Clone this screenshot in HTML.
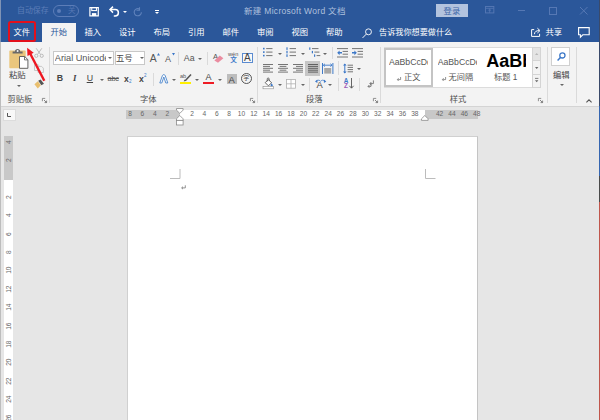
<!DOCTYPE html>
<html lang="zh-CN">
<head>
<meta charset="utf-8">
<title>新建 Microsoft Word 文档</title>
<style>
html,body{margin:0;padding:0;}
body{width:600px;height:420px;overflow:hidden;background:#e6e6e6;position:relative;
  font-family:"Liberation Sans","Noto Sans CJK SC",sans-serif;font-size:8.5px;color:#444;}
#app{position:absolute;left:0;top:0;width:600px;height:420px;overflow:hidden;}
#app div,#app span,#app svg{position:absolute;}
#title{left:0;top:0;width:599px;height:42px;background:#2b579a;}
#ribbon{left:0;top:42px;width:599px;height:64px;background:#f3f3f3;border-bottom:1px solid #d4d4d4;}
.t{white-space:nowrap;line-height:1;}
.tab{color:#fff;font-size:8.3px;top:28px;}
.sep{width:1px;background:#dadada;}
.lbl{top:95.2px;font-size:8.3px;color:#505050;}
.arr{width:0;height:0;border-left:2px solid transparent;border-right:2px solid transparent;border-top:2.2px solid #666;}
svg{overflow:visible;}
</style>
</head>
<body>
<div id="app">
<div id="title"></div>
<div id="ribbon"></div>

<!-- title bar -->
<div class="t" style="left:17px;top:6.8px;font-size:7.9px;color:#5c7db8;">自动保存</div>
<div style="left:53px;top:5px;width:24px;height:10px;border:1px solid #5c7db8;border-radius:6px;"></div>
<div style="left:57px;top:8.5px;width:4px;height:4px;border-radius:2px;background:#5c7db8;"></div>
<div class="t" style="left:68px;top:6.5px;font-size:7.5px;color:#5678b4;">关</div>
<svg style="left:89.3px;top:6.6px" width="10.2" height="9.6" viewBox="0 0 11 11"><path d="M0.7 0.7h9.6v9.6h-9.6z" fill="none" stroke="#fff" stroke-width="1.4"/><rect x="2.8" y="0.7" width="5.4" height="3.4" fill="none" stroke="#fff" stroke-width="1.2"/><rect x="3" y="7" width="5" height="3.3" fill="#fff"/></svg>
<svg style="left:109px;top:6px" width="11" height="11" viewBox="0 0 11 11"><path d="M1 3.6h5.2a3.2 3.2 0 0 1 0 6.4h-1.4" fill="none" stroke="#fff" stroke-width="1.5"/><path d="M4 0.6L1 3.6L4 6.6" fill="none" stroke="#fff" stroke-width="1.5"/></svg>
<div class="arr" style="left:122.5px;top:10.5px;border-top-color:#fff;"></div>
<svg style="left:133px;top:6px" width="10" height="11" viewBox="0 0 10 11"><path d="M6.5 1.2v3h-3" fill="none" stroke="#5f82bb" stroke-width="1.1"/><path d="M6.8 3.2a3.6 3.6 0 1 0 1.6 3" fill="none" stroke="#5f82bb" stroke-width="1.1"/></svg>
<div style="left:155px;top:9.5px;width:4px;height:1px;background:#fff;"></div>
<div class="arr" style="left:155px;top:12px;border-top-color:#fff;"></div>
<div class="t" style="left:244px;top:6.7px;font-size:8.5px;letter-spacing:0.3px;color:#afc0de;">新建 Microsoft Word 文档</div>
<div style="left:436px;top:4px;width:32px;height:13px;background:#b3c3de;"></div>
<div class="t" style="left:443.6px;top:6.8px;font-size:8.3px;color:#3f67a8;">登录</div>
<svg style="left:485px;top:6.3px" width="9.4" height="7.4" viewBox="0 0 10 8"><rect x="0.5" y="0.5" width="9" height="7" fill="none" stroke="#5678b4" stroke-width="1"/><path d="M0.5 2.5h9M5 2.5v5M3.5 4.5h3" fill="none" stroke="#5678b4" stroke-width="0.9"/></svg>
<div style="left:517.5px;top:10px;width:7.5px;height:1px;background:#5678b4;"></div>
<div style="left:548.5px;top:6.5px;width:6.5px;height:6.5px;border:1px solid #5678b4;"></div>
<svg style="left:579.5px;top:7px" width="7.5" height="7.5" viewBox="0 0 7.5 7.5"><path d="M0 0L7.5 7.5M7.5 0L0 7.5" stroke="#5678b4" stroke-width="1" fill="none"/></svg>

<!-- tabs -->
<div style="left:42px;top:23px;width:33.5px;height:20px;background:#f3f3f3;"></div>
<div class="t tab" style="left:13.5px;color:#fff;">文件</div>
<div class="t tab" style="left:50.5px;color:#2b579a;">开始</div>
<div class="t tab" style="left:84.5px;color:#fff;">插入</div>
<div class="t tab" style="left:119px;color:#fff;">设计</div>
<div class="t tab" style="left:153.5px;color:#fff;">布局</div>
<div class="t tab" style="left:188px;color:#fff;">引用</div>
<div class="t tab" style="left:222.5px;color:#fff;">邮件</div>
<div class="t tab" style="left:257px;color:#fff;">审阅</div>
<div class="t tab" style="left:291.5px;color:#fff;">视图</div>
<div class="t tab" style="left:326px;color:#fff;">帮助</div>
<div style="left:7.6px;top:20.8px;width:28.2px;height:21.2px;border:2px solid #e3101c;border-radius:2.5px;box-sizing:border-box;"></div>
<svg style="left:361.5px;top:27.8px" width="10.5" height="10.5" viewBox="0 0 11 11"><circle cx="6.8" cy="4" r="3.1" fill="none" stroke="#fff" stroke-width="0.95"/><path d="M4.5 6.4L0.6 10.4" stroke="#fff" stroke-width="1" fill="none"/></svg>
<div class="t" style="left:379px;top:29px;font-size:8.15px;color:#fff;">告诉我你想要做什么</div>
<svg style="left:530.5px;top:26.5px" width="11" height="10" viewBox="0 0 11 10"><path d="M3.2 2.6h-2.6v6.8h8v-2.6" fill="none" stroke="#fff" stroke-width="1"/><path d="M3.4 7.2c0.2-2.6 2-3.6 4.6-3.6M6.4 1.2l2.6 2.4l-2.6 2.4" fill="none" stroke="#fff" stroke-width="1"/></svg>
<div class="t" style="left:545.5px;top:28px;font-size:8.4px;color:#fff;">共享</div>
<svg style="left:577.5px;top:26.5px" width="12" height="11" viewBox="0 0 12 11"><path d="M0.6 0.6h10.6v7.2h-6.4l-2.4 2.4v-2.4h-1.8z" fill="none" stroke="#fff" stroke-width="1.1"/></svg>

<!-- ribbon -->
<svg style="left:9px;top:47.5px" width="20" height="21" viewBox="0 0 20 21">
<rect x="0.3" y="2.6" width="16.4" height="17.6" rx="0.8" fill="#eac67d"/>
<path d="M3.6 5.4v-1.9h2.4a2.6 2.6 0 0 1 5.2 0h2.4v1.9z" fill="#6a6a6a"/><circle cx="8.6" cy="3" r="1" fill="#f3f3f3"/>
<path d="M10.5 8.5h5.2l3.2 3.2v8.6h-8.4z" fill="#fff" stroke="#555" stroke-width="0.9"/>
<path d="M15.5 8.7v3.2h3.2" fill="none" stroke="#555" stroke-width="0.8"/>
</svg>
<div class="t" style="left:9px;top:71.3px;font-size:8.4px;color:#444;">粘贴</div>
<div class="arr" style="left:16.5px;top:84.5px;border-top-color:#666;"></div>
<svg style="left:34px;top:48px" width="10" height="10" viewBox="0 0 10 10"><path d="M2.2 0.3L6.6 6.6M7.8 0.3L3.4 6.6" stroke="#b4b4b4" stroke-width="0.9" fill="none"/><circle cx="2.3" cy="7.8" r="1.6" fill="none" stroke="#b4b4b4" stroke-width="0.9"/><circle cx="7.7" cy="7.8" r="1.6" fill="none" stroke="#b4b4b4" stroke-width="0.9"/></svg>
<svg style="left:34px;top:64px" width="10" height="9" viewBox="0 0 10 9"><path d="M0.5 0.5h3.4l1.6 1.6v4.4h-5z" fill="#f3f3f3" stroke="#bcbcbc" stroke-width="0.8"/><path d="M4 2.4h3.6l1.8 1.8v4.3h-5.4z" fill="#f3f3f3" stroke="#bcbcbc" stroke-width="0.8"/></svg>
<svg style="left:34px;top:79px" width="11" height="10" viewBox="0 0 11 10"><path d="M0.4 5.2l3.4-3l3 4l-3 3.4z" fill="#e9bf6e"/><path d="M4.2 1.8l2.4-1.4l3.4 4.4l-2.6 1.4z" fill="#555"/></svg>
<svg style="left:24px;top:45px" width="24" height="40" viewBox="0 0 24 40"><path d="M20.3 35.7L6.4 9" stroke="#ee1620" stroke-width="2.4" fill="none"/><path d="M3.1 2.7L9.7 7.7L3.5 11z" fill="#ee1620"/></svg>
<div class="t lbl" style="left:7.5px;">剪贴板</div>
<svg style="left:41.7px;top:98px" width="5" height="5" viewBox="0 0 5 5"><path d="M0.4 3.2v-2.8h2.8" fill="none" stroke="#777" stroke-width="0.8"/><path d="M2 2l2.4 2.4M4.6 2.6v2h-2" fill="none" stroke="#666" stroke-width="0.8"/></svg>
<div class="sep" style="left:49.0px;top:46.5px;height:56.5px;"></div>
<div style="left:52.5px;top:50.5px;width:61px;height:14.5px;background:#fff;border:1px solid #c8c8c8;box-sizing:border-box;"></div>
<div class="t" style="left:54.8px;top:54.2px;width:51px;overflow:hidden;font-size:9.2px;color:#555;">Arial Unicode MS</div>
<div style="left:114.5px;top:50.5px;width:30.5px;height:14.5px;background:#fff;border:1px solid #c8c8c8;box-sizing:border-box;"></div>
<div class="t" style="left:116px;top:54px;font-size:8.3px;color:#444;">五号</div>
<div class="arr" style="left:107.5px;top:57px;border-top-color:#666;"></div>
<div class="arr" style="left:139.5px;top:57px;border-top-color:#666;"></div>
<div class="t" style="left:149.8px;top:54.2px;font-size:10.4px;color:#555;">A</div>
<svg style="left:156.5px;top:52.5px" width="3" height="2.4" viewBox="0 0 3 2.4"><path d="M0 2.4L1.5 0L3 2.4z" fill="#3c78c8"/></svg>
<div class="t" style="left:165px;top:55.2px;font-size:9px;color:#555;">A</div>
<svg style="left:171.5px;top:52.5px" width="3" height="2.4" viewBox="0 0 3 2.4"><path d="M0 0L1.5 2.4L3 0z" fill="#3c78c8"/></svg>
<div class="sep" style="left:177.5px;top:51.5px;height:13.5px;"></div>
<div class="t" style="left:183.8px;top:53.8px;font-size:8.8px;color:#555;">Aa</div>
<div class="arr" style="left:197.5px;top:57.5px;border-top-color:#666;"></div>
<div class="sep" style="left:206.5px;top:51.5px;height:13.5px;"></div>
<div class="t" style="left:213px;top:52.5px;font-size:7.6px;color:#555;">A</div>
<svg style="left:214px;top:54.5px" width="10" height="8" viewBox="0 0 10 8"><path d="M0.4 5.4L5.8 0.4L9.4 3.2L4 7.8z" fill="#ea8ca0"/></svg>
<div class="t" style="left:228px;top:51.6px;font-size:5.6px;color:#555;">wén</div>
<div class="t" style="left:230.3px;top:57.4px;font-size:6.6px;color:#3c78c8;font-weight:700;">文</div>
<div style="left:241.7px;top:52.5px;width:11px;height:10.5px;border:1px solid #5b8bd0;box-sizing:border-box;background:#f8f8f8;"></div>
<div class="t" style="left:243.9px;top:53.2px;font-size:10px;color:#444;">A</div>
<div class="t" style="left:56.7px;top:74.3px;font-size:8.8px;font-weight:700;color:#444;">B</div>
<div class="t" style="left:73px;top:74.3px;font-size:8.8px;font-style:italic;font-family:'Liberation Serif',serif;font-weight:700;color:#444;">I</div>
<div class="t" style="left:86.7px;top:74.3px;font-size:8.8px;text-decoration:underline;color:#444;">U</div>
<div class="arr" style="left:100px;top:79px;border-top-color:#666;"></div>
<div class="t" style="left:107.5px;top:75px;font-size:7.4px;color:#555;text-decoration:line-through;letter-spacing:-0.2px;">abc</div>
<div class="t" style="left:124px;top:74.5px;font-size:8.6px;font-weight:700;color:#444;">x</div>
<div class="t" style="left:129px;top:79.5px;font-size:4.5px;color:#3c78c8;">2</div>
<div class="t" style="left:139px;top:74.5px;font-size:8.6px;font-weight:700;color:#444;">x</div>
<div class="t" style="left:144px;top:74px;font-size:4.5px;color:#3c78c8;">2</div>
<div class="sep" style="left:152.5px;top:72.5px;height:13.5px;"></div>
<svg style="left:158.7px;top:74px" width="9.6" height="9.6" viewBox="0 0 9.6 9.6"><path d="M0.8 9L3.4 1.6a1.5 1.5 0 0 1 2.8 0L8.8 9h-2L4.8 3L2.8 9z" fill="#fff" stroke="#4a84cc" stroke-width="0.9"/></svg>
<div class="arr" style="left:171.7px;top:79px;border-top-color:#666;"></div>
<div class="t" style="left:180px;top:73.5px;font-size:5.6px;color:#555;">ab</div>
<svg style="left:183px;top:73.5px" width="9" height="8" viewBox="0 0 9 8"><path d="M8 0.4L2.2 6.8" stroke="#555" stroke-width="1.5" fill="none"/><path d="M0.6 7.6l1-2l1.4 1.2z" fill="#555"/></svg>
<div style="left:180px;top:81.7px;width:11px;height:2.8px;background:#ffef00;"></div>
<div class="arr" style="left:195px;top:79px;border-top-color:#666;"></div>
<div class="t" style="left:205.6px;top:73.3px;font-size:9px;color:#444;">A</div>
<div style="left:203.2px;top:81.7px;width:11px;height:2.8px;background:#ee1c25;"></div>
<div class="arr" style="left:218px;top:79px;border-top-color:#666;"></div>
<div style="left:227px;top:74px;width:9.6px;height:9.8px;background:#bdbdbd;"></div>
<div class="t" style="left:228.6px;top:74.5px;font-size:9.4px;color:#444;">A</div>
<div style="left:241px;top:73.2px;width:10.6px;height:10.6px;border:0.8px solid #555;border-radius:6px;box-sizing:border-box;"></div>
<div class="t" style="left:243.3px;top:75.4px;font-size:6px;color:#444;">字</div>
<div class="t lbl" style="left:140px;">字体</div>
<svg style="left:250px;top:98px" width="5" height="5" viewBox="0 0 5 5"><path d="M0.4 3.2v-2.8h2.8" fill="none" stroke="#777" stroke-width="0.8"/><path d="M2 2l2.4 2.4M4.6 2.6v2h-2" fill="none" stroke="#666" stroke-width="0.8"/></svg>
<div class="sep" style="left:257.0px;top:46.5px;height:56.5px;"></div>
<svg style="left:263px;top:47px" width="9.5" height="11" viewBox="0 0 9.5 11"><path d="M3.2 1.6H9.5" stroke="#666" stroke-width="0.9"/><path d="M3.2 5.1H9.5" stroke="#666" stroke-width="0.9"/><path d="M3.2 8.6H9.5" stroke="#666" stroke-width="0.9"/><rect x="0" y="0.8" width="1.6" height="1.6" fill="#3c78c8"/><rect x="0" y="4.3" width="1.6" height="1.6" fill="#3c78c8"/><rect x="0" y="7.8" width="1.6" height="1.6" fill="#3c78c8"/></svg>
<div class="arr" style="left:278px;top:52.5px;border-top-color:#666;"></div>
<svg style="left:286px;top:47px" width="10" height="11" viewBox="0 0 10 11"><path d="M3.6 1.6H10" stroke="#666" stroke-width="0.9"/><path d="M3.6 5.1H10" stroke="#666" stroke-width="0.9"/><path d="M3.6 8.6H10" stroke="#666" stroke-width="0.9"/><rect x="0.4" y="0.30000000000000004" width="1.2" height="2.6" fill="#3c78c8"/><rect x="0.4" y="3.8" width="1.2" height="2.6" fill="#3c78c8"/><rect x="0.4" y="7.3" width="1.2" height="2.6" fill="#3c78c8"/></svg>
<div class="arr" style="left:301px;top:52.5px;border-top-color:#666;"></div>
<svg style="left:308.7px;top:47px" width="11.3" height="11" viewBox="0 0 11.3 11"><path d="M3 1.6H9.5" stroke="#666" stroke-width="0.9"/><path d="M5.4 5.1H10.4" stroke="#666" stroke-width="0.9"/><path d="M7.6 8.6H11.3" stroke="#666" stroke-width="0.9"/><rect x="0.2" y="0.40000000000000013" width="1.2" height="2.4" fill="#3c78c8"/><rect x="2.8" y="3.8999999999999995" width="1.2" height="2.4" fill="#3c78c8"/><rect x="5" y="7.3999999999999995" width="1.2" height="2.4" fill="#3c78c8"/></svg>
<div class="arr" style="left:322.5px;top:52.5px;border-top-color:#666;"></div>
<div class="sep" style="left:331.5px;top:46.7px;height:12.299999999999997px;"></div>
<svg style="left:337px;top:47.5px" width="11" height="10" viewBox="0 0 11 10"><path d="M0 0.6H11M0 9H11" stroke="#666" stroke-width="0.9"/><path d="M5.6 3.4H11M5.6 6.2H11" stroke="#666" stroke-width="0.9"/><path d="M0.2 4.8L2.6 2.4v1.7h2.4v1.4h-2.4v1.7z" fill="#3c78c8"/></svg>
<svg style="left:352px;top:47.5px" width="11" height="10" viewBox="0 0 11 10"><path d="M0 0.6H11M0 9H11" stroke="#666" stroke-width="0.9"/><path d="M5.6 3.4H11M5.6 6.2H11" stroke="#666" stroke-width="0.9"/><path d="M4.8 4.8L2.4 2.4v1.7h-2.4v1.4h2.4v1.7z" fill="#3c78c8"/></svg>
<svg style="left:263px;top:64.2px" width="10" height="11" viewBox="0 0 10 11"><path d="M0 0.5H10" stroke="#666" stroke-width="0.9"/><path d="M0 2.4H7" stroke="#666" stroke-width="0.9"/><path d="M0 4.3H10" stroke="#666" stroke-width="0.9"/><path d="M0 6.2H7" stroke="#666" stroke-width="0.9"/><path d="M0 8.1H10" stroke="#666" stroke-width="0.9"/></svg>
<svg style="left:278px;top:64.2px" width="10" height="11" viewBox="0 0 10 11"><path d="M0 0.5H10" stroke="#666" stroke-width="0.9"/><path d="M1.6 2.4H8.4" stroke="#666" stroke-width="0.9"/><path d="M0 4.3H10" stroke="#666" stroke-width="0.9"/><path d="M1.6 6.2H8.4" stroke="#666" stroke-width="0.9"/><path d="M0 8.1H10" stroke="#666" stroke-width="0.9"/></svg>
<svg style="left:293px;top:64.2px" width="10" height="11" viewBox="0 0 10 11"><path d="M0 0.5H10" stroke="#666" stroke-width="0.9"/><path d="M3 2.4H10" stroke="#666" stroke-width="0.9"/><path d="M0 4.3H10" stroke="#666" stroke-width="0.9"/><path d="M3 6.2H10" stroke="#666" stroke-width="0.9"/><path d="M0 8.1H10" stroke="#666" stroke-width="0.9"/></svg>
<div style="left:305.3px;top:61px;width:14.7px;height:15px;background:#c6c6c6;"></div>
<svg style="left:308px;top:64.2px" width="10" height="11" viewBox="0 0 10 11"><path d="M0 0.5H10" stroke="#555" stroke-width="0.9"/><path d="M0 2.4H10" stroke="#555" stroke-width="0.9"/><path d="M0 4.3H10" stroke="#555" stroke-width="0.9"/><path d="M0 6.2H10" stroke="#555" stroke-width="0.9"/><path d="M0 8.1H10" stroke="#555" stroke-width="0.9"/></svg>
<svg style="left:322px;top:62.5px" width="11.4" height="11" viewBox="0 0 11.4 11"><path d="M0.5 0V11M10.9 0V11" stroke="#3c78c8" stroke-width="1"/><path d="M1.4 2.2H10" stroke="#3c78c8" stroke-width="0.9"/><path d="M3 0.8L1.4 2.2L3 3.6M8.4 0.8L10 2.2L8.4 3.6" fill="none" stroke="#3c78c8" stroke-width="0.9"/><rect x="2.2" y="5" width="7" height="5.6" fill="#a8a8a8"/></svg>
<div class="sep" style="left:337.5px;top:61px;height:14px;"></div>
<svg style="left:343.3px;top:62.5px" width="10" height="11" viewBox="0 0 10 11"><path d="M1.8 1V10" stroke="#3c78c8" stroke-width="1"/><path d="M0 2.6L1.8 0.4L3.6 2.6zM0 8.4L1.8 10.6L3.6 8.4z" fill="#3c78c8"/><path d="M4.6 2.2H10M4.6 4.4H10M4.6 6.6H10M4.6 8.8H10" stroke="#666" stroke-width="0.9"/></svg>
<div class="arr" style="left:356.7px;top:67.5px;border-top-color:#666;"></div>
<svg style="left:263px;top:78px" width="11" height="11" viewBox="0 0 11 11"><path d="M2.2 4.6L5.4 1.6L8.6 4.8L5.4 7.8z" fill="#fff" stroke="#555" stroke-width="0.9"/><path d="M4.2 3.4V1a1 1 0 0 1 2 0V3" fill="none" stroke="#555" stroke-width="0.8"/><path d="M8.6 5.2c0.8 1 1.2 1.6 1.2 2.2a1.1 1.1 0 0 1-2.2 0c0-0.6 0.4-1.2 1-2.2z" fill="#3c78c8"/><rect x="0" y="8.6" width="10.6" height="2.2" fill="#fff" stroke="#8a8a8a" stroke-width="0.6"/></svg>
<div class="arr" style="left:277.5px;top:83.5px;border-top-color:#666;"></div>
<svg style="left:286px;top:78.7px" width="10" height="9.6" viewBox="0 0 10 9.6"><rect x="0.4" y="0.4" width="9.2" height="8.8" fill="#fff" stroke="#b0b0b0" stroke-width="0.8"/><path d="M5 0.4V9.2M0.4 4.8H9.6" stroke="#b0b0b0" stroke-width="0.8"/></svg>
<div class="arr" style="left:301px;top:83.5px;border-top-color:#666;"></div>
<div class="sep" style="left:309.2px;top:77.5px;height:13.5px;"></div>
<div class="t" style="left:316.6px;top:79.6px;font-size:9.4px;color:#444;">A</div>
<svg style="left:314.7px;top:78.6px" width="11.3" height="5" viewBox="0 0 11.3 5"><path d="M1.2 2.4c2-1.6 3.4-1.6 4.4 0c1 -1.6 2.6-1.6 4.6 0" fill="none" stroke="#3c78c8" stroke-width="0.8"/><path d="M0 2.6L2.4 0.6v3.4zM11.3 2.6L8.9 0.6v3.4z" fill="#3c78c8"/></svg>
<div class="arr" style="left:328px;top:83.5px;border-top-color:#666;"></div>
<div class="sep" style="left:337.5px;top:77.5px;height:13.5px;"></div>
<div class="t" style="left:343.7px;top:77.5px;font-size:6.4px;font-weight:700;color:#3c78c8;">A</div>
<div class="t" style="left:343.9px;top:83px;font-size:6.4px;font-weight:700;color:#9b59b6;">Z</div>
<svg style="left:349.4px;top:78px" width="5" height="11" viewBox="0 0 5 11"><path d="M2.5 0V10M0.4 7.8L2.5 10.2L4.6 7.8" fill="none" stroke="#555" stroke-width="0.9"/></svg>
<div class="sep" style="left:359.0px;top:77.5px;height:13.5px;"></div>
<svg style="left:366.7px;top:79.7px" width="7" height="8" viewBox="0 0 7 8"><path d="M6.4 0.4v3.2h-3.4M4.4 2L2.8 3.6L4.4 5.2" fill="none" stroke="#666" stroke-width="0.8"/><path d="M4 3.4v3h-3M2.4 5L1 6.4L2.4 7.8" fill="none" stroke="#666" stroke-width="0.8"/></svg>
<div class="t lbl" style="left:306px;">段落</div>
<svg style="left:372.5px;top:98px" width="5" height="5" viewBox="0 0 5 5"><path d="M0.4 3.2v-2.8h2.8" fill="none" stroke="#777" stroke-width="0.8"/><path d="M2 2l2.4 2.4M4.6 2.6v2h-2" fill="none" stroke="#666" stroke-width="0.8"/></svg>
<div class="sep" style="left:379.8px;top:46.5px;height:56.5px;"></div>
<div style="left:384px;top:47px;width:148px;height:40.5px;background:#fff;border-top:1px solid #dcdcdc;border-bottom:1px solid #dcdcdc;box-sizing:border-box;"></div>
<div style="left:384px;top:47.6px;width:49px;height:39px;border:2.4px solid #c4c4c4;box-sizing:border-box;"></div>
<div class="t" style="left:388.9px;top:58px;width:39.6px;overflow:hidden;font-size:8.7px;color:#555;">AaBbCcDd</div>
<svg style="left:397px;top:76.6px" width="4" height="4" viewBox="0 0 4 4"><path d="M3.6 0v2.6h-3M1.6 1.2L0.4 2.6L1.6 4" fill="none" stroke="#666" stroke-width="0.7"/></svg>
<div class="t" style="left:404px;top:73.8px;font-size:8.2px;color:#555;">正文</div>
<div class="t" style="left:437.7px;top:58px;width:39.2px;overflow:hidden;font-size:8.7px;color:#555;">AaBbCcDd</div>
<svg style="left:441.7px;top:76.6px" width="4" height="4" viewBox="0 0 4 4"><path d="M3.6 0v2.6h-3M1.6 1.2L0.4 2.6L1.6 4" fill="none" stroke="#666" stroke-width="0.7"/></svg>
<div class="t" style="left:448.5px;top:73.8px;font-size:8.2px;color:#555;">无间隔</div>
<div class="t" style="left:486.2px;top:52.3px;width:39.6px;overflow:hidden;font-size:18px;font-weight:700;color:#000;">AaBb</div>
<div class="t" style="left:494px;top:73.8px;font-size:8.2px;color:#555;">标题 1</div>
<div style="left:532.4px;top:47px;width:8.6px;height:40.5px;background:#f3f3f3;border:1px solid #d4d4d4;box-sizing:border-box;"></div>
<div style="left:532.4px;top:47px;width:8.6px;height:14px;background:#e4e4e4;border:1px solid #d4d4d4;box-sizing:border-box;"></div>
<div style="left:532.4px;top:73.5px;width:8.6px;height:1px;background:#d4d4d4;"></div>
<svg style="left:535px;top:52.5px" width="3.4" height="2" viewBox="0 0 3.4 2"><path d="M0 2L1.7 0L3.4 2z" fill="#b8b8b8"/></svg>
<svg style="left:535px;top:66.5px" width="3.4" height="2" viewBox="0 0 3.4 2"><path d="M0 0L1.7 2L3.4 0z" fill="#666"/></svg>
<svg style="left:535px;top:78px" width="3.4" height="4.4" viewBox="0 0 3.4 4.4"><path d="M0 0.4H3.4" stroke="#666" stroke-width="0.8"/><path d="M0 2.2L1.7 4.2L3.4 2.2z" fill="#666"/></svg>
<div class="t lbl" style="left:449.7px;">样式</div>
<svg style="left:538px;top:98px" width="5" height="5" viewBox="0 0 5 5"><path d="M0.4 3.2v-2.8h2.8" fill="none" stroke="#777" stroke-width="0.8"/><path d="M2 2l2.4 2.4M4.6 2.6v2h-2" fill="none" stroke="#666" stroke-width="0.8"/></svg>
<div class="sep" style="left:546.5px;top:46.5px;height:56.5px;"></div>
<div style="left:551.3px;top:46.6px;width:19px;height:19px;background:#fff;border:1px solid #d0d0d0;box-sizing:border-box;"></div>
<svg style="left:556.5px;top:52px" width="9" height="9" viewBox="0 0 9 9"><circle cx="5.4" cy="3.4" r="2.6" fill="none" stroke="#3c78c8" stroke-width="1.3"/><path d="M3.4 5.4L0.6 8.4" stroke="#3c78c8" stroke-width="1.4"/></svg>
<div class="t" style="left:553px;top:70.8px;font-size:8.4px;color:#444;">编辑</div>
<div class="arr" style="left:560px;top:83.5px;border-top-color:#666;"></div>
<div class="sep" style="left:575.5px;top:46.5px;height:56.5px;"></div>
<svg style="left:586px;top:98.5px" width="6" height="4" viewBox="0 0 6 4"><path d="M0.4 3.4L3 0.8L5.6 3.4" fill="none" stroke="#555" stroke-width="1.1"/></svg>

<!-- document area -->
<div style="left:3px;top:109.3px;width:11px;height:10px;background:#f8f8f8;border:1px solid #dcdcdc;"></div>
<svg style="left:7px;top:113px" width="4" height="4" viewBox="0 0 4 4"><path d="M0.5 0v3.5h3.5" fill="none" stroke="#555" stroke-width="1"/></svg>
<div style="left:126px;top:110.2px;width:352px;height:8.8px;background:#c8c8c8;"></div>
<div style="left:179.6px;top:110.2px;width:245.20000000000002px;height:8.8px;background:#fff;"></div>
<div class="t" style="left:124.08px;top:111.3px;width:12px;text-align:center;font-size:6.6px;color:#666;">8</div>
<div class="t" style="left:136.46px;top:111.3px;width:12px;text-align:center;font-size:6.6px;color:#666;">6</div>
<div class="t" style="left:148.84px;top:111.3px;width:12px;text-align:center;font-size:6.6px;color:#666;">4</div>
<div class="t" style="left:161.22px;top:111.3px;width:12px;text-align:center;font-size:6.6px;color:#666;">2</div>
<div class="t" style="left:185.98px;top:111.3px;width:12px;text-align:center;font-size:6.6px;color:#666;">2</div>
<div class="t" style="left:198.36px;top:111.3px;width:12px;text-align:center;font-size:6.6px;color:#666;">4</div>
<div class="t" style="left:210.74px;top:111.3px;width:12px;text-align:center;font-size:6.6px;color:#666;">6</div>
<div class="t" style="left:223.12px;top:111.3px;width:12px;text-align:center;font-size:6.6px;color:#666;">8</div>
<div class="t" style="left:235.50px;top:111.3px;width:12px;text-align:center;font-size:6.6px;color:#666;">10</div>
<div class="t" style="left:247.88px;top:111.3px;width:12px;text-align:center;font-size:6.6px;color:#666;">12</div>
<div class="t" style="left:260.26px;top:111.3px;width:12px;text-align:center;font-size:6.6px;color:#666;">14</div>
<div class="t" style="left:272.64px;top:111.3px;width:12px;text-align:center;font-size:6.6px;color:#666;">16</div>
<div class="t" style="left:285.02px;top:111.3px;width:12px;text-align:center;font-size:6.6px;color:#666;">18</div>
<div class="t" style="left:297.40px;top:111.3px;width:12px;text-align:center;font-size:6.6px;color:#666;">20</div>
<div class="t" style="left:309.78px;top:111.3px;width:12px;text-align:center;font-size:6.6px;color:#666;">22</div>
<div class="t" style="left:322.16px;top:111.3px;width:12px;text-align:center;font-size:6.6px;color:#666;">24</div>
<div class="t" style="left:334.54px;top:111.3px;width:12px;text-align:center;font-size:6.6px;color:#666;">26</div>
<div class="t" style="left:346.92px;top:111.3px;width:12px;text-align:center;font-size:6.6px;color:#666;">28</div>
<div class="t" style="left:359.30px;top:111.3px;width:12px;text-align:center;font-size:6.6px;color:#666;">30</div>
<div class="t" style="left:371.68px;top:111.3px;width:12px;text-align:center;font-size:6.6px;color:#666;">32</div>
<div class="t" style="left:384.06px;top:111.3px;width:12px;text-align:center;font-size:6.6px;color:#666;">34</div>
<div class="t" style="left:396.44px;top:111.3px;width:12px;text-align:center;font-size:6.6px;color:#666;">36</div>
<div class="t" style="left:408.82px;top:111.3px;width:12px;text-align:center;font-size:6.6px;color:#666;">38</div>
<div class="t" style="left:433.58px;top:111.3px;width:12px;text-align:center;font-size:6.6px;color:#666;">42</div>
<div class="t" style="left:445.96px;top:111.3px;width:12px;text-align:center;font-size:6.6px;color:#666;">44</div>
<div class="t" style="left:458.34px;top:111.3px;width:12px;text-align:center;font-size:6.6px;color:#666;">46</div>
<div class="t" style="left:470.72px;top:111.3px;width:12px;text-align:center;font-size:6.6px;color:#666;">48</div>
<svg style="left:175.80px;top:107.5px" width="7.6" height="18" viewBox="0 0 7.6 18"><path d="M0.5 0.5h6.6v1.6l-3.3 3.3l-3.3-3.3z" fill="#fff" stroke="#8a8a8a" stroke-width="0.8"/><path d="M0.5 12.4v-1.6l3.3-3.3l3.3 3.3v1.6z" fill="#fff" stroke="#8a8a8a" stroke-width="0.8"/><rect x="0.5" y="12.4" width="6.6" height="4.6" fill="#fff" stroke="#8a8a8a" stroke-width="0.8"/></svg>
<svg style="left:421.40px;top:114.5px" width="7.6" height="6" viewBox="0 0 7.6 6"><path d="M0.5 5.4v-1.6l3.3-3.3l3.3 3.3v1.6z" fill="#fff" stroke="#8a8a8a" stroke-width="0.8"/></svg>
<div style="left:4.2px;top:135.5px;width:8.8px;height:44.0px;background:#c8c8c8;"></div>
<div style="left:4.2px;top:179.5px;width:8.8px;height:240.5px;background:#fff;"></div>
<div class="t" style="left:2.80px;top:138.50px;width:12px;height:6.4px;text-align:center;font-size:6.6px;color:#666;transform:rotate(-90deg);">4</div>
<div class="t" style="left:2.80px;top:156.90px;width:12px;height:6.4px;text-align:center;font-size:6.6px;color:#666;transform:rotate(-90deg);">2</div>
<div class="t" style="left:2.80px;top:193.70px;width:12px;height:6.4px;text-align:center;font-size:6.6px;color:#666;transform:rotate(-90deg);">2</div>
<div class="t" style="left:2.80px;top:212.10px;width:12px;height:6.4px;text-align:center;font-size:6.6px;color:#666;transform:rotate(-90deg);">4</div>
<div class="t" style="left:2.80px;top:230.50px;width:12px;height:6.4px;text-align:center;font-size:6.6px;color:#666;transform:rotate(-90deg);">6</div>
<div class="t" style="left:2.80px;top:248.90px;width:12px;height:6.4px;text-align:center;font-size:6.6px;color:#666;transform:rotate(-90deg);">8</div>
<div class="t" style="left:2.80px;top:267.30px;width:12px;height:6.4px;text-align:center;font-size:6.6px;color:#666;transform:rotate(-90deg);">10</div>
<div class="t" style="left:2.80px;top:285.70px;width:12px;height:6.4px;text-align:center;font-size:6.6px;color:#666;transform:rotate(-90deg);">12</div>
<div class="t" style="left:2.80px;top:304.10px;width:12px;height:6.4px;text-align:center;font-size:6.6px;color:#666;transform:rotate(-90deg);">14</div>
<div class="t" style="left:2.80px;top:322.50px;width:12px;height:6.4px;text-align:center;font-size:6.6px;color:#666;transform:rotate(-90deg);">16</div>
<div class="t" style="left:2.80px;top:340.90px;width:12px;height:6.4px;text-align:center;font-size:6.6px;color:#666;transform:rotate(-90deg);">18</div>
<div class="t" style="left:2.80px;top:359.30px;width:12px;height:6.4px;text-align:center;font-size:6.6px;color:#666;transform:rotate(-90deg);">20</div>
<div class="t" style="left:2.80px;top:377.70px;width:12px;height:6.4px;text-align:center;font-size:6.6px;color:#666;transform:rotate(-90deg);">22</div>
<div class="t" style="left:2.80px;top:396.10px;width:12px;height:6.4px;text-align:center;font-size:6.6px;color:#666;transform:rotate(-90deg);">24</div>
<div class="t" style="left:2.80px;top:414.50px;width:12px;height:6.4px;text-align:center;font-size:6.6px;color:#666;transform:rotate(-90deg);">26</div>
<div style="left:127px;top:136px;width:349px;height:290px;background:#fff;border:1px solid #d0d0d0;border-right-color:#c4c4c4;"></div>
<svg style="left:170px;top:169px" width="11" height="10" viewBox="0 0 11 10"><path d="M10 0v9.5h-10" fill="none" stroke="#bcbcbc" stroke-width="1"/></svg>
<svg style="left:425px;top:169px" width="11" height="10" viewBox="0 0 11 10"><path d="M0.5 0v9.5h10" fill="none" stroke="#bcbcbc" stroke-width="1"/></svg>
<svg style="left:180.5px;top:185px" width="5" height="5" viewBox="0 0 5 5"><path d="M4.3 0.3v2.6h-3.6M2 1.6L0.7 2.9L2 4.2" fill="none" stroke="#777" stroke-width="0.8"/></svg>
<div style="left:598.5px;top:0;width:2px;height:106px;background:#3a4a6a;"></div>
<div style="left:598.5px;top:106px;width:2px;height:70px;background:#3565b0;"></div>
<div style="left:598.5px;top:176px;width:2px;height:26px;background:#4a4a4a;"></div>
<div style="left:598.5px;top:202px;width:2px;height:218px;background:#c0564c;"></div>
<div style="left:0;top:0;width:1px;height:42px;background:#7f93b5;"></div>
<div style="left:0;top:42px;width:1px;height:378px;background:#bdbdbd;"></div>

</div>
</body>
</html>
